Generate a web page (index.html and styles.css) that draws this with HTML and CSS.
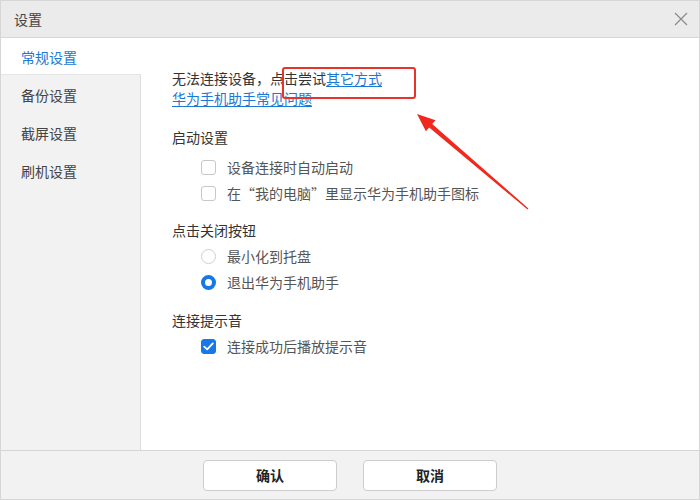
FILE: index.html
```html
<!DOCTYPE html>
<html lang="zh-CN">
  <head>
    <meta charset="UTF-8" />
    <title>设置</title>
    <link rel="stylesheet" href="styles.css">
  </head>
  <body>
    <div class="window">
      <div class="titlebar">
        <span class="title">设置</span>
        <span class="close">
          <svg width="14" height="14" viewBox="0 0 14 14">
            <path d="M1 1 L13 13 M13 1 L1 13" stroke="#8a8a8a" stroke-width="1.2" fill="none" />
          </svg>
        </span>
      </div>

      <div class="main">
        <div class="sidebar">
          <div class="nav-item active">常规设置</div>
          <div class="nav-item">备份设置</div>
          <div class="nav-item">截屏设置</div>
          <div class="nav-item">刷机设置</div>
        </div>

        <div class="content">
          <div class="notice">
            <div>无法连接设备，点击尝试<a class="link" href="#">其它方式</a></div>
            <div><a class="link" href="#">华为手机助手常见问题</a></div>
          </div>

          <div class="section first">
            <div class="section-title">启动设置</div>
            <label class="option">
              <span class="checkbox"></span>
              <span>设备连接时自动启动</span>
            </label>
            <label class="option">
              <span class="checkbox"></span>
              <span>在“我的电脑”里显示华为手机助手图标</span>
            </label>
          </div>

          <div class="section">
            <div class="section-title">点击关闭按钮</div>
            <label class="option">
              <span class="radio"></span>
              <span>最小化到托盘</span>
            </label>
            <label class="option">
              <span class="radio checked"></span>
              <span>退出华为手机助手</span>
            </label>
          </div>

          <div class="section">
            <div class="section-title">连接提示音</div>
            <label class="option">
              <span class="checkbox checked">
                <svg width="11" height="9" viewBox="0 0 11 9">
                  <path d="M1.2 4.6 L4.2 7.4 L9.8 1.4" stroke="#fff" stroke-width="1.8" fill="none" stroke-linecap="round" stroke-linejoin="round" />
                </svg>
              </span>
              <span>连接成功后播放提示音</span>
            </label>
          </div>
        </div>
      </div>

      <div class="footer">
        <button class="btn">确认</button>
        <button class="btn">取消</button>
      </div>

      <!-- annotation overlay -->
      <div class="mark-box"></div>
      <svg class="mark-arrow" width="700" height="500" viewBox="0 0 700 500">
        <polygon points="417,114 435.5,120.2 432.2,124.1 528.4,208.5 527.6,209.6 429.2,127.4 425.9,131.2" fill="#f0281e" />
      </svg>
    </div>
  </body>
</html>
```

FILE: styles.css
```css
* {
  margin: 0;
  padding: 0;
  box-sizing: border-box;
}

body {
  font-family: "Noto Sans CJK SC", "Noto Sans", sans-serif;
  font-size: 14px;
  color: #333;
  background: #fff;
}

.window {
  position: relative;
  width: 700px;
  height: 500px;
  border: 1px solid #d6d6d6;
  display: flex;
  flex-direction: column;
  overflow: hidden;
}

.titlebar {
  height: 37px;
  flex: none;
  background: #ebebeb;
  border-bottom: 1px solid #d6d6d6;
  display: flex;
  align-items: center;
  justify-content: space-between;
  padding: 0 11px 0 13px;
}

.title {
  font-size: 14px;
  color: #444;
}

.close {
  display: flex;
  width: 14px;
  height: 14px;
}

.main {
  flex: 1;
  display: flex;
  min-height: 0;
}

.sidebar {
  width: 140px;
  flex: none;
  background: #f2f2f2;
  border-right: 1px solid #dcdcdc;
}

.nav-item {
  height: 38px;
  line-height: 36px;
  padding: 2px 0 0 20px;
  color: #444;
}

.nav-item.active {
  height: 37px;
  line-height: 35px;
  background: #fff;
  color: #1a78d6;
  margin-right: -1px;
  border-bottom: 1px solid #e4e4e4;
}

.content {
  flex: 1;
  padding: 30px 0 0 31px;
}

.notice {
  line-height: 20px;
  margin-bottom: 19px;
}

.link {
  color: #1a78d6;
  text-decoration: underline;
  text-underline-offset: 2px;
}

.section {
  margin-bottom: 15px;
}

.section.first {
  margin-bottom: 14px;
}

.section-title {
  line-height: 20px;
  margin-bottom: 3px;
  color: #333;
}

.section.first .section-title {
  margin-bottom: 7px;
}

.option {
  display: flex;
  align-items: center;
  height: 26px;
  padding-left: 29px;
  gap: 11px;
  color: #555;
}

.checkbox {
  width: 15px;
  height: 15px;
  border: 1px solid #c8c8c8;
  border-radius: 3px;
  background: #fff;
  display: flex;
  align-items: center;
  justify-content: center;
}

.checkbox.checked {
  background: #1677e6;
  border-color: #1677e6;
}

.radio {
  width: 15px;
  height: 15px;
  border: 1px solid #cfcfcf;
  border-radius: 50%;
  background: #fff;
}

.radio.checked {
  border: 4px solid #1677e6;
}

.footer {
  height: 49px;
  flex: none;
  background: #f2f2f2;
  border-top: 1px solid #d6d6d6;
  display: flex;
  align-items: center;
  justify-content: center;
  gap: 26px;
}

.btn {
  width: 134px;
  height: 31px;
  background: #fff;
  border: 1px solid #cdcdcd;
  border-radius: 4px;
  font-family: inherit;
  font-size: 14px;
  font-weight: bold;
  color: #222;
}

/* red annotation */
.mark-box {
  position: absolute;
  left: 281px;
  top: 66px;
  width: 134px;
  height: 32px;
  border: 2px solid #e8332a;
  border-radius: 3px;
}

.mark-arrow {
  position: absolute;
  left: -1px;
  top: -1px;
  pointer-events: none;
}
```
